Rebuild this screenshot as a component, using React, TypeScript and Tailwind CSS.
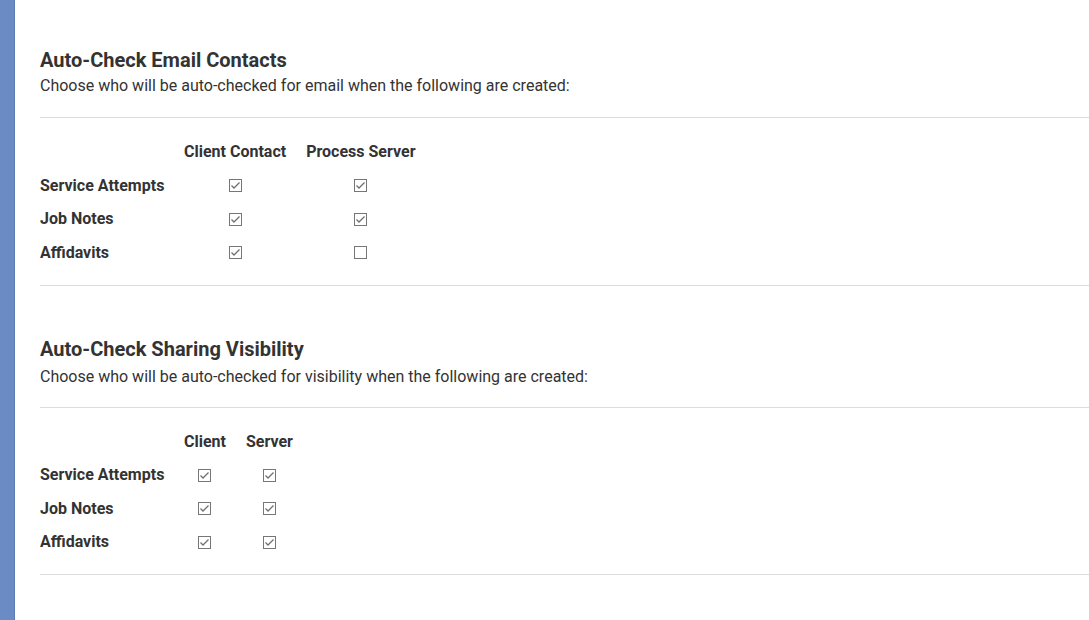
type Row = { label: string; values: boolean[] };

function Box({ checked }: { checked: boolean }) {
  return (
    <svg width="13" height="13" viewBox="0 0 13 13" className="inline-block align-middle">
      <rect x="0.5" y="0.5" width="12" height="12" fill="#fff" stroke="#767676" />
      {checked && (
        <path d="M2.5 6.5 L5 9 L10.5 3.5" fill="none" stroke="#6f6f6f" strokeWidth="1.3" />
      )}
    </svg>
  );
}

function Section({
  title,
  subtitle,
  columns,
  rows,
  loose,
}: {
  title: string;
  subtitle: string;
  columns: string[];
  rows: Row[];
  loose?: boolean;
}) {
  return (
    <section>
      <h2 className="text-[20px] font-bold leading-[24px] text-[#333]">{title}</h2>
      <p className={(loose ? "mt-[4px]" : "mt-[2px]") + " text-[16px] leading-[24px] text-[#333]"}>
        {subtitle}
      </p>
      <hr className={(loose ? "mt-[18px]" : "mt-[19px]") + " border-t border-[#dcdcdc]"} />
      <table className="mt-[17px] border-collapse text-[16px] text-[#333]">
        <thead>
          <tr className="h-[34px]">
            <th className="w-[134px] p-0" />
            {columns.map((c) => (
              <th key={c} className="px-[10px] text-center font-bold">
                {c}
              </th>
            ))}
          </tr>
        </thead>
        <tbody>
          {rows.map((r) => (
            <tr key={r.label} className="h-[33.5px]">
              <td className="p-0 font-bold whitespace-nowrap">{r.label}</td>
              {r.values.map((v, i) => (
                <td key={i} className="px-[10px] pb-[2px] text-center leading-none">
                  <Box checked={v} />
                </td>
              ))}
            </tr>
          ))}
        </tbody>
      </table>
      <hr className="mt-[15px] border-t border-[#dcdcdc]" />
    </section>
  );
}

export default function App() {
  return (
    <div
      className="flex h-[620px] w-full overflow-hidden bg-white"
      style={{ fontFamily: "Roboto, 'Liberation Sans', sans-serif" }}
    >
      <div className="w-[15px] shrink-0 border-r border-[#5a7bb5] bg-[#6a8bc3]" />
      <main className="flex-1 pl-[25px] pt-[48px]">
        <Section
          title="Auto-Check Email Contacts"
          subtitle="Choose who will be auto-checked for email when the following are created:"
          columns={["Client Contact", "Process Server"]}
          rows={[
            { label: "Service Attempts", values: [true, true] },
            { label: "Job Notes", values: [true, true] },
            { label: "Affidavits", values: [true, false] },
          ]}
        />
        <div className="h-[51px]" />
        <Section
          loose
          title="Auto-Check Sharing Visibility"
          subtitle="Choose who will be auto-checked for visibility when the following are created:"
          columns={["Client", "Server"]}
          rows={[
            { label: "Service Attempts", values: [true, true] },
            { label: "Job Notes", values: [true, true] },
            { label: "Affidavits", values: [true, true] },
          ]}
        />
      </main>
    </div>
  );
}
